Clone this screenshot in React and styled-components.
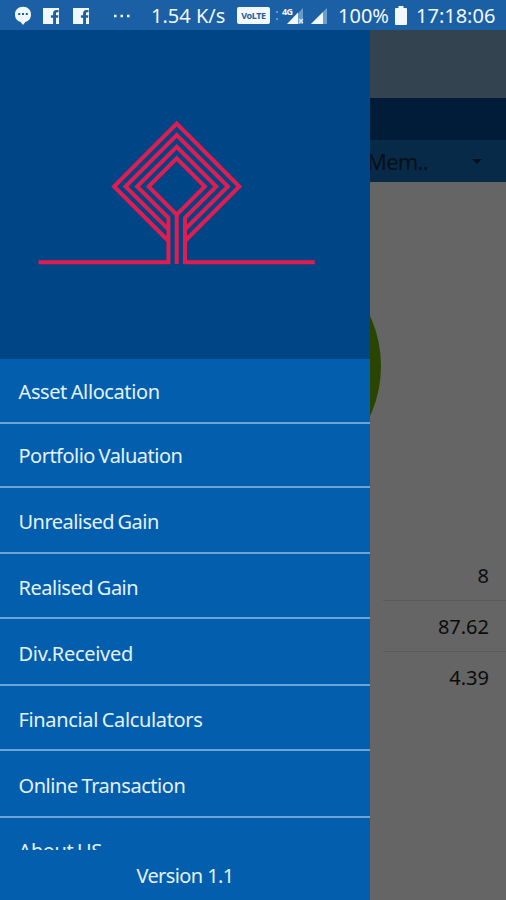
import styled, { createGlobalStyle } from 'styled-components';

const GlobalStyle = createGlobalStyle`
  * {
    box-sizing: border-box;
  }

  body {
    margin: 0;
    font-family: 'Noto Sans', 'Open Sans', sans-serif;
  }
`;

const Screen = styled.div`
  position: relative;
  display: flex;
  flex-direction: column;
  width: 506px;
  height: 900px;
  overflow: hidden;
  background: #656565;
`;

const StatusBar = styled.header`
  display: flex;
  align-items: center;
  flex: none;
  height: 30px;
  padding: 1px 7px 0 14px;
  background: #1b5fa5;
  color: #f1f8ff;

  svg {
    display: block;
    flex: none;
  }
`;

const StatusText = styled.span`
  flex: none;
  width: ${props => props.width}px;
  margin-left: ${props => props.gap || 0}px;
  font-size: 20px;
  line-height: 28px;
  white-space: nowrap;
`;

const Space = styled.span`
  flex: none;
  width: ${props => props.size}px;
`;

const Page = styled.main`
  display: flex;
  flex-direction: column;
  flex: 1;
  color: #0c0c0c;
`;

const Toolbar = styled.div`
  height: 68px;
  background: #344350;
`;

const TabBar = styled.div`
  height: 42px;
  background: #001c38;
`;

const MemberSelect = styled.div`
  display: flex;
  align-items: center;
  justify-content: flex-end;
  height: 42px;
  padding-right: 24px;
  background: #082a49;
  color: #071018;
  font-size: 22px;

  span {
    width: 105px;
    letter-spacing: -0.8px;
  }
`;

const Chart = styled.div`
  display: flex;
  height: 369px;
  padding: 64px 0 0 140px;

  svg {
    display: block;
  }
`;

const Figure = styled.div`
  display: flex;
  align-items: center;
  justify-content: flex-end;
  height: ${props => props.height}px;
  margin-left: 383px;
  padding-right: 17px;
  border-bottom: ${props => (props.last ? 0 : 1)}px solid #5a5a5a;
  font-size: 20px;
`;

const Drawer = styled.aside`
  position: absolute;
  top: 30px;
  bottom: 0;
  left: 0;
  display: flex;
  flex-direction: column;
  width: 370px;
  background: #045eae;
  color: #e3f2fc;
`;

const Banner = styled.div`
  flex: none;
  height: 329px;
  background: #004687;

  svg {
    display: block;
  }
`;

const Menu = styled.nav`
  flex: none;
  height: 491px;
  overflow: hidden;
`;

const MenuItem = styled.div`
  display: flex;
  align-items: center;
  height: ${props => props.height}px;
  padding: ${props => props.top}px 0 0 18.5px;
  border-bottom: 2px solid #6ba5d3;
  font-size: 20px;
  letter-spacing: ${props => props.spacing}px;
  word-spacing: -1px;
  white-space: nowrap;
`;

const Version = styled.footer`
  display: flex;
  align-items: center;
  justify-content: center;
  flex: 1;
  font-size: 20px;
  letter-spacing: -0.6px;
`;

const items = [
  { title: 'Asset Allocation', height: 65, top: 1, spacing: -0.4 },
  { title: 'Portfolio Valuation', height: 64, top: 0, spacing: -0.52 },
  { title: 'Unrealised Gain', height: 66, top: 2, spacing: -0.54 },
  { title: 'Realised Gain', height: 65, top: 3, spacing: -0.48 },
  { title: 'Div.Received', height: 67, top: 3, spacing: -0.3 },
  { title: 'Financial Calculators', height: 65, top: 3, spacing: -0.35 },
  { title: 'Online Transaction', height: 67, top: 3, spacing: -0.45 },
  { title: 'About US', height: 66, top: 1, spacing: -0.4 },
];

const ChatIcon = () => (
  <svg width='18' height='20' viewBox='0 0 18 20'>
    <path d='M9 .8c4.8 0 8 3.2 8 7.6 0 4-2.3 6.6-5.6 7.5L9 19l-2.4-3.1C3.3 15 1 12.4 1 8.4 1 4 4.2.8 9 .8z' fill='currentColor' />
    <path d='M4.2 8h2M8 8h2M11.8 8h2' stroke='#1b5fa5' strokeWidth='2' />
  </svg>
);

const FacebookIcon = () => (
  <svg width='18' height='18' viewBox='0 0 18 18'>
    <path
      d='M1 1h16v16h-3v-6.2h2.1l.3-2.5H14V6.6c0-.9.4-1.3 1.3-1.3h1.2V3h-2c-2.4 0-3.4 1.3-3.4 3.3v2H8.9v2.5h2.2V17H1z'
      fill='currentColor'
    />
  </svg>
);

const DotsIcon = () => (
  <svg width='18' height='4' viewBox='0 0 18 4'>
    <path d='M1 2h2.5M7.5 2H10M14 2h2.5' stroke='currentColor' strokeWidth='2.5' />
  </svg>
);

const VolteBadge = styled.span`
  display: flex;
  align-items: center;
  justify-content: center;
  flex: none;
  width: 33px;
  height: 17px;
  border-radius: 2px;
  background: #f1f8ff;
  color: #245d92;
  font-size: 9px;
  font-weight: 700;
  letter-spacing: -0.4px;
`;

const NetworkIcon = () => (
  <svg width='29' height='20' viewBox='0 0 29 20'>
    <path d='M2 5v2M2 12v2' stroke='#5d9bd0' strokeWidth='2' />
    <path d='M13 18 28 2v16z' fill='#689bc8' />
    <path d='M12 18 23 6.5V18z' fill='currentColor' />
    <path d='m24 13 4 4m0-4-4 4' stroke='#d9edfb' strokeWidth='1.4' />
    <text x='7' y='9' fill='currentColor' fontSize='9' fontWeight='700' letterSpacing='-.6'>
      4G
    </text>
  </svg>
);

const SignalIcon = () => (
  <svg width='18' height='18' viewBox='0 0 18 18'>
    <path d='M1 17 17 1v16z' fill='#6d9fcb' />
    <path d='M1 17 13 5v12z' fill='currentColor' />
  </svg>
);

const BatteryIcon = () => (
  <svg width='12' height='19' viewBox='0 0 12 19'>
    <path d='M3.5 0h5v2H11a1 1 0 0 1 1 1v15a1 1 0 0 1-1 1H1a1 1 0 0 1-1-1V3a1 1 0 0 1 1-1h2.5z' fill='currentColor' />
  </svg>
);

const TreeLogo = () => (
  <svg width='370' height='329' viewBox='0 30 370 329'>
    <g fill='none' stroke='#e31c4f' strokeWidth='4'>
      <path d='M168.4 241 114.1 186.5l62.6-62.8 62.6 62.8L185 241' />
      <path d='M168.4 229.4l-42.9-42.9 51.2-51.3 51.2 51.3-42.9 42.9' />
      <path d='M38.5 262.3h129.9v-44.5l-31.3-31.3 39.6-39.7 39.6 39.7-31.3 31.3v44.5h129.8' />
      <path d='m176.7 214.7-28.1-28.2 28.1-28.1 28.1 28.1z' />
      <path d='M176.7 213v51' />
    </g>
  </svg>
);

const App = () => {
  return (
    <>
      <GlobalStyle />
      <Screen>
        <StatusBar>
          <ChatIcon />
          <Space size={10} />
          <FacebookIcon />
          <Space size={12} />
          <FacebookIcon />
          <Space size={23} />
          <DotsIcon />
          <StatusText width={75} gap={20}>1.54 K/s</StatusText>
          <Space size={11} />
          <VolteBadge>VoLTE</VolteBadge>
          <Space size={5} />
          <NetworkIcon />
          <Space size={6} />
          <SignalIcon />
          <StatusText width={51} gap={10}>100%</StatusText>
          <Space size={6} />
          <BatteryIcon />
          <StatusText width={82} gap={9}>17:18:06</StatusText>
        </StatusBar>
        <Page>
          <Toolbar />
          <TabBar />
          <MemberSelect>
            <span>Mem..</span>
            <svg width='10' height='5' viewBox='0 0 10 5'>
              <path d='M0 0h10L5 5z' fill='currentColor' />
            </svg>
          </MemberSelect>
          <Chart>
            <svg width='242' height='242' viewBox='0 0 242 242'>
              <circle cx='121' cy='120' r='120' fill='#294500' />
            </svg>
          </Chart>
          <Figure height={50}>8</Figure>
          <Figure height={51}>87.62</Figure>
          <Figure height={50} last>4.39</Figure>
        </Page>
        <Drawer>
          <Banner>
            <TreeLogo />
          </Banner>
          <Menu>
            {items.map(({ title, height, top, spacing }) => (
              <MenuItem key={title} height={height} top={top} spacing={spacing}>
                {title}
              </MenuItem>
            ))}
          </Menu>
          <Version>Version 1.1</Version>
        </Drawer>
      </Screen>
    </>
  );
};

export default App;
